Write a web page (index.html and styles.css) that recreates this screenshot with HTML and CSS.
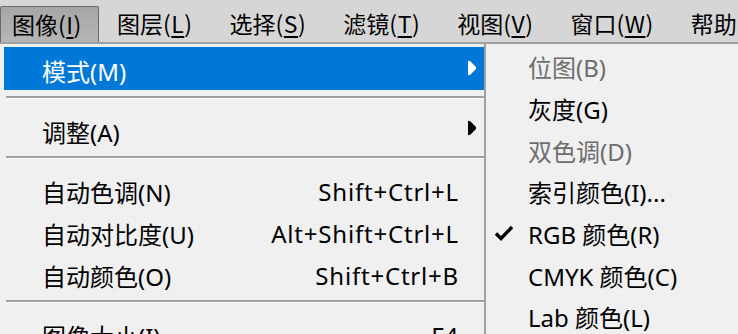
FILE: index.html
```html
<!DOCTYPE html>
<html lang="zh-CN">
<head>
<meta charset="utf-8">
<link rel="stylesheet" href="styles.css">
</head>
<body>
<div class="menubar">
  <div class="mb-item active">图像<span class="ak">(<u>I</u>)</span></div>
  <div class="mb-item">图层<span class="ak">(<u>L</u>)</span></div>
  <div class="mb-item">选择<span class="ak">(<u>S</u>)</span></div>
  <div class="mb-item">滤镜<span class="ak">(<u>T</u>)</span></div>
  <div class="mb-item">视图<span class="ak">(<u>V</u>)</span></div>
  <div class="mb-item">窗口<span class="ak">(<u>W</u>)</span></div>
  <div class="mb-item">帮助<span class="ak">(<u>H</u>)</span></div>
</div>
<div class="area">
  <div class="menu">
    <div class="row hl"><span class="label">模式(M)</span>
      <svg class="arrow" width="8" height="14" viewBox="0 0 8 14"><polygon points="0,0 2,0 8,6 8,8 2,14 0,14" fill="#fff"/></svg>
    </div>
    <div class="sep"></div>
    <div class="row"><span class="label">调整(A)</span>
      <svg class="arrow" width="8" height="14" viewBox="0 0 8 14"><polygon points="0,0 2,0 8,6 8,8 2,14 0,14" fill="#000"/></svg>
    </div>
    <div class="sep"></div>
    <div class="row"><span class="label">自动色调(N)</span><span class="key">Shift+Ctrl+L</span></div>
    <div class="row"><span class="label">自动对比度(U)</span><span class="key">Alt+Shift+Ctrl+L</span></div>
    <div class="row"><span class="label">自动颜色(O)</span><span class="key">Shift+Ctrl+B</span></div>
    <div class="sep"></div>
    <div class="row"><span class="label">图像大小(I)...</span><span class="key">F4</span></div>
  </div>
  <div class="submenu">
    <div class="srow dis">位图(B)</div>
    <div class="srow">灰度(G)</div>
    <div class="srow dis">双色调(D)</div>
    <div class="srow">索引颜色(I)...</div>
    <div class="srow"><svg class="check" width="18" height="16" viewBox="0 0 18 16"><path d="M1 8.5 L6 13.5 L17 2" fill="none" stroke="#000" stroke-width="3.4"/></svg>RGB 颜色(R)</div>
    <div class="srow">CMYK 颜色(C)</div>
    <div class="srow">Lab 颜色(L)</div>
  </div>
</div>
</body>
</html>
```
FILE: styles.css
```css
html, body {
  margin: 0;
  padding: 0;
  width: 738px;
  height: 334px;
  overflow: hidden;
  background: #f0f0f0;
  font-family: "Noto Sans", "Noto Sans CJK SC", sans-serif;
  font-size: 24px;
  color: #000;
}
.menubar {
  height: 42px;
  background: #d6d6d6;
  border-bottom: 2px solid #a0a0a0;
  display: flex;
  align-items: flex-end;
  white-space: nowrap;
  overflow: hidden;
}
.mb-item {
  height: 36px;
  line-height: 35px;
  margin-right: 37px;
  font-family: "Noto Sans CJK SC", sans-serif;
  font-size: 23px;
  box-sizing: border-box;
  flex: none;
}
.mb-item .ak {
  letter-spacing: 0.5px;
}
.mb-item u {
  text-decoration-thickness: 2px;
  text-underline-offset: 3px;
}
.mb-item.active {
  width: 99px;
  padding-left: 11px;
  border: 1px solid #6a6a6a;
  border-bottom: none;
  border-radius: 2px 2px 0 0;
  background: linear-gradient(#a6a6a6, #b6b6b6);
  margin-right: 18px;
}
.area {
  display: flex;
}
.menu {
  width: 484px;
  flex: none;
  padding: 3px 0 0 4px;
  box-sizing: border-box;
}
.row {
  height: 42px;
  display: flex;
  align-items: center;
  padding: 4px 26px 0 38px;
  box-sizing: border-box;
  white-space: nowrap;
}
.row.hl {
  height: 43px;
  background: #0078d7;
  color: #fff;
}
.label { flex: 1; }
.key {
  text-align: right;
  letter-spacing: 0.8px;
  margin-right: -1px;
}
.arrow {
  margin-right: -18px;
  margin-top: -6px;
}
.sep {
  height: 2px;
  margin: 6px 0 9px 2px;
  background: #a0a0a0;
  border-bottom: 1px solid #fff;
}
.submenu {
  flex: 1;
  border-left: 2px solid #a0a0a0;
  margin-top: -1px;
  height: 300px;
  padding-top: 1px;
}
.srow {
  height: 41.67px;
  display: flex;
  align-items: center;
  padding: 4px 0 0 42px;
  box-sizing: border-box;
  white-space: nowrap;
  position: relative;
}
.srow.dis { color: #6d6d6d; }
.check {
  position: absolute;
  left: 9px;
  top: 14px;
}
```
